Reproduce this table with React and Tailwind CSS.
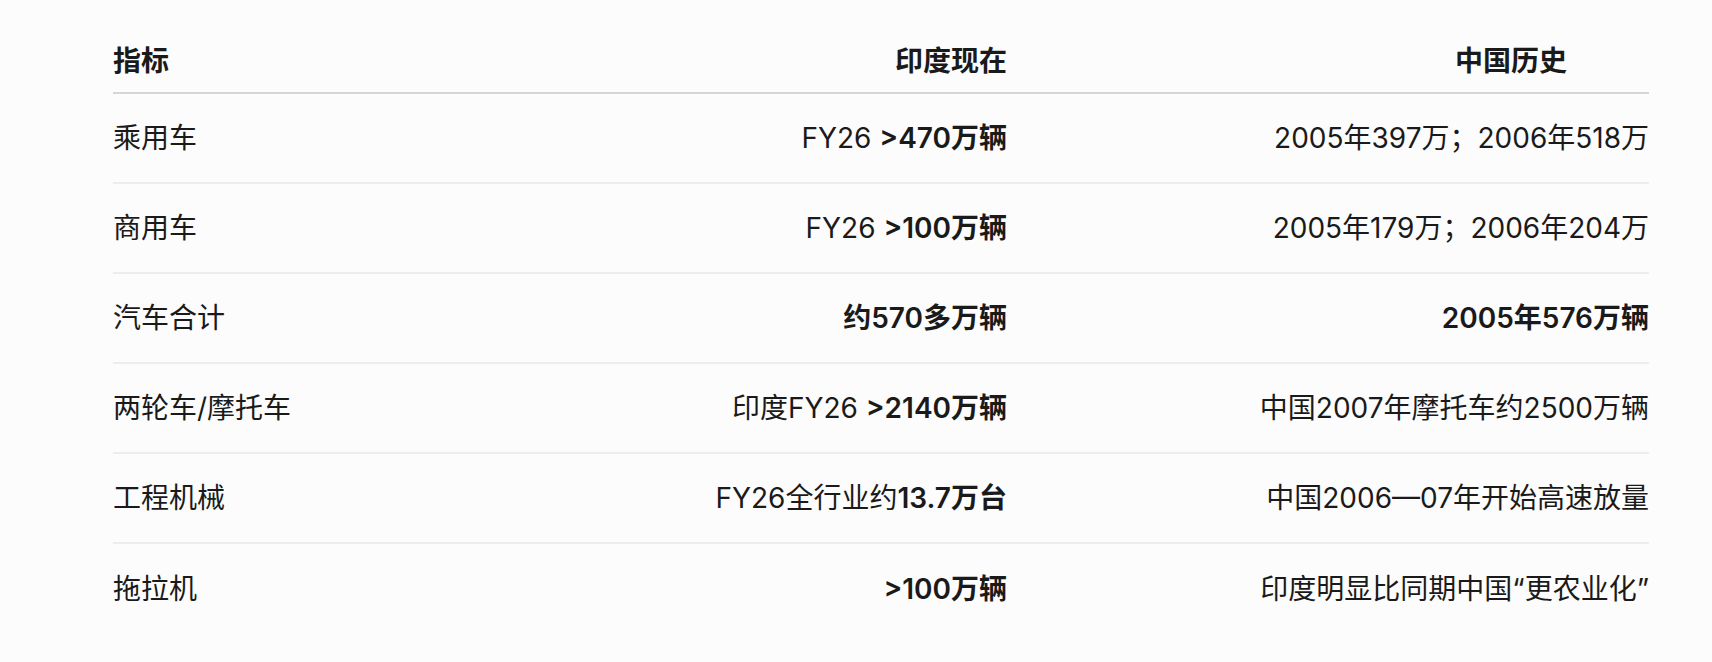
const rows = [
  { name: '乘用车', india: <>FY26 <b className="font-semibold">&gt;470万辆</b></>, china: '2005年397万；2006年518万' },
  { name: '商用车', india: <>FY26 <b className="font-semibold">&gt;100万辆</b></>, china: '2005年179万；2006年204万' },
  { name: '汽车合计', india: <b className="font-semibold">约570多万辆</b>, china: <b className="font-semibold">2005年576万辆</b> },
  { name: '两轮车/摩托车', india: <>印度FY26 <b className="font-semibold">&gt;2140万辆</b></>, china: '中国2007年摩托车约2500万辆' },
  { name: '工程机械', india: <>FY26全行业约<b className="font-semibold">13.7万台</b></>, china: '中国2006—07年开始高速放量' },
  { name: '拖拉机', india: <b className="font-semibold">&gt;100万辆</b>, china: '印度明显比同期中国“更农业化”' },
]

export default function App() {
  return (
    <div
      className="min-h-[662px] w-full bg-[#fcfcfc] pl-[113px] pr-[63px] pt-[30px] text-[28px] text-[#1a1a1a]"
      style={{ fontFamily: 'Inter, "Noto Sans CJK SC", sans-serif' }}
    >
      <table className="w-full border-collapse">
        <thead>
          <tr className="border-b-2 border-[#d6d6d6]">
            <th className="h-[63px] w-[447px] text-left font-semibold">指标</th>
            <th className="h-[63px] w-[447px] text-right font-semibold">印度现在</th>
            <th className="h-[63px] pr-[82px] text-right font-semibold">中国历史</th>
          </tr>
        </thead>
        <tbody>
          {rows.map((r, i) => (
            <tr key={r.name} className={i < rows.length - 1 ? 'border-b-2 border-[#ededed]' : ''}>
              <td className="h-[90px] text-left">{r.name}</td>
              <td className="h-[90px] text-right">{r.india}</td>
              <td className="h-[90px] text-right">{r.china}</td>
            </tr>
          ))}
        </tbody>
      </table>
    </div>
  )
}
